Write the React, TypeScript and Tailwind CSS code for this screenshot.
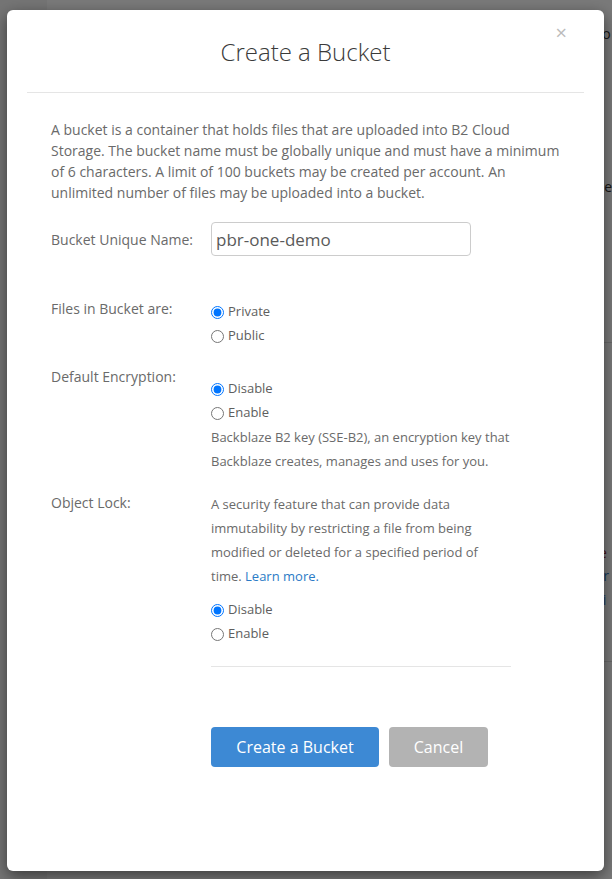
import { useState } from 'react'

function Radio({
  name,
  label,
  checked,
  onChange,
}: {
  name: string
  label: string
  checked: boolean
  onChange: () => void
}) {
  return (
    <label className="flex h-[24px] items-center gap-[4px] text-[13px] text-[#5e5e5e]">
      <input
        type="radio"
        name={name}
        checked={checked}
        onChange={onChange}
        className="m-0 h-[13px] w-[13px]"
      />
      <span>{label}</span>
    </label>
  )
}

export default function App() {
  const [access, setAccess] = useState('private')
  const [encryption, setEncryption] = useState('disable')
  const [lock, setLock] = useState('disable')

  return (
    <div
      className="relative h-[879px] w-[612px] overflow-hidden bg-white"
      style={{ fontFamily: '"Open Sans", "Liberation Sans", sans-serif' }}
    >
      {/* page behind the modal */}
      <div className="flex h-full">
        <div className="h-full w-[55px] bg-[#f4f4f4]" />
        <div className="flex flex-1 flex-col pl-[549px] text-[14px] text-[#333]">
          <div className="mt-[24px] leading-[20px]">co</div>
          <div className="leading-[20px]">7</div>
          <div className="mt-[113px] leading-[20px]">pe</div>
          <div className="mt-[145px] border-t border-[#ddd]" />
          <div className="mt-[200px] leading-[20px] text-[#a0303a]">le</div>
          <div className="mt-[2px] leading-[22px] text-[#2b7bc6]">Sr</div>
          <div className="mt-[2px] leading-[22px] text-[#2b7bc6]">Fi</div>
          <div className="mt-[50px] border-t border-[#ddd]" />
        </div>
      </div>

      {/* backdrop */}
      <div className="absolute inset-0 bg-[rgba(0,0,0,0.52)]" />

      {/* modal */}
      <div className="absolute left-[7px] top-[10px] h-[861px] w-[597px] rounded-[6px] bg-white shadow-[0_5px_15px_rgba(0,0,0,0.5)]">
        <div className="relative mx-5 flex h-[83px] items-center justify-center border-b border-[#e5e5e5]">
          <h2 className="mt-[2px] text-[24px] font-light text-[#3a3a3a]">Create a Bucket</h2>
          <button className="absolute right-[17px] top-[13px] text-[20px] leading-[20px] text-[#bbb]">
            ×
          </button>
        </div>

        <div className="px-[44px]">
          <p className="mt-[26px] text-[14px] leading-[21px] text-[#6a6a6a]">
            A bucket is a container that holds files that are uploaded into B2 Cloud
            Storage. The bucket name must be globally unique and must have a minimum
            of 6 characters. A limit of 100 buckets may be created per account. An
            unlimited number of files may be uploaded into a bucket.
          </p>

          <div className="mt-[19px] flex items-center">
            <div className="w-[160px] text-[14px] text-[#6a6a6a]">Bucket Unique Name:</div>
            <input
              defaultValue="pbr-one-demo"
              className="h-[34px] w-[260px] rounded-[4px] border border-[#ccc] px-[4px] text-[17px] text-[#5a5a5a] outline-none"
            />
          </div>

          <div className="mt-[43px] flex items-start">
            <div className="w-[160px] text-[14px] leading-[20px] text-[#6a6a6a]">
              Files in Bucket are:
            </div>
            <div className="mt-px flex flex-col">
              <Radio name="access" label="Private" checked={access === 'private'} onChange={() => setAccess('private')} />
              <Radio name="access" label="Public" checked={access === 'public'} onChange={() => setAccess('public')} />
            </div>
          </div>

          <div className="mt-[19px] flex items-start">
            <div className="w-[160px] text-[14px] leading-[20px] text-[#6a6a6a]">
              Default Encryption:
            </div>
            <div className="flex w-[302px] flex-col pt-[10px]">
              <Radio name="enc" label="Disable" checked={encryption === 'disable'} onChange={() => setEncryption('disable')} />
              <Radio name="enc" label="Enable" checked={encryption === 'enable'} onChange={() => setEncryption('enable')} />
              <p className="text-[13px] leading-[24px] text-[#6a6a6a]">
                Backblaze B2 key (SSE-B2), an encryption key that Backblaze creates,
                manages and uses for you.
              </p>
            </div>
          </div>

          <div className="mt-[19px] flex items-start">
            <div className="mt-px w-[160px] text-[14px] leading-[20px] text-[#6a6a6a]">
              Object Lock:
            </div>
            <div className="flex w-[300px] flex-col">
              <p className="text-[13px] leading-[24px] text-[#6a6a6a]">
                A security feature that can provide data immutability by restricting a
                file from being modified or deleted for a specified period of time.{' '}
                <a href="#" className="text-[#2b7bc6]">
                  Learn more.
                </a>
              </p>
              <div className="mt-[10px] flex flex-col">
                <Radio name="lock" label="Disable" checked={lock === 'disable'} onChange={() => setLock('disable')} />
                <Radio name="lock" label="Enable" checked={lock === 'enable'} onChange={() => setLock('enable')} />
              </div>
              <div className="mt-[20px] border-t border-[#e5e5e5]" />
            </div>
          </div>

          <div className="ml-[160px] mt-[60px] flex gap-[10px]">
            <button className="h-[40px] w-[168px] rounded-[4px] bg-[#3d89d4] text-[16px] text-white">
              Create a Bucket
            </button>
            <button className="h-[40px] w-[99px] rounded-[4px] bg-[#b3b3b3] text-[16px] text-white">
              Cancel
            </button>
          </div>
        </div>
      </div>
    </div>
  )
}
